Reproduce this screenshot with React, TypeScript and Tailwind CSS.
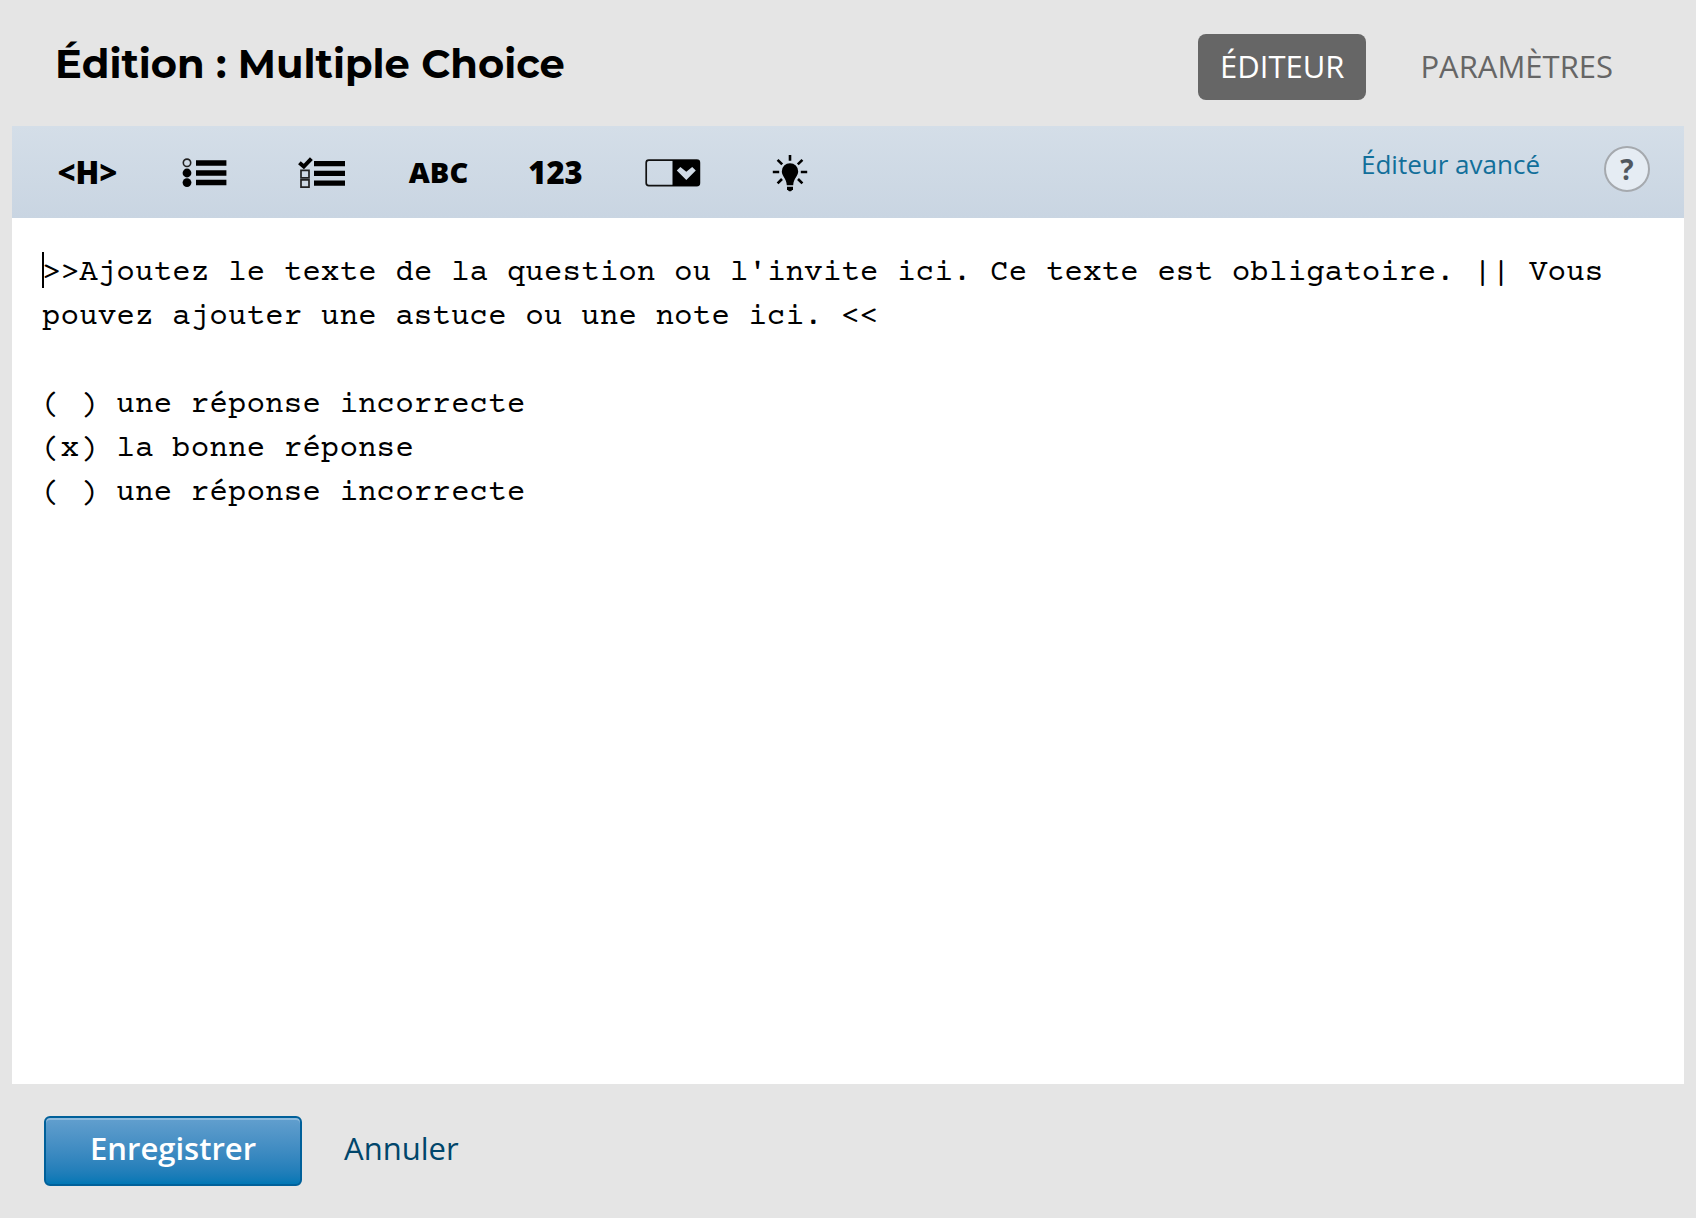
import { useState } from "react";

const initialText = `>>Ajoutez le texte de la question ou l'invite ici. Ce texte est obligatoire. || Vous pouvez ajouter une astuce ou une note ici. <<

( ) une réponse incorrecte
(x) la bonne réponse
( ) une réponse incorrecte`;

function ChoiceIcon() {
  return (
    <svg width="46" height="32" viewBox="0 0 46 32" aria-hidden="true">
      <circle cx="5" cy="5.8" r="3.7" fill="none" stroke="#222" strokeWidth="1.6" />
      <circle cx="5" cy="16" r="4.4" />
      <circle cx="5" cy="25.6" r="4.4" />
      <path d="M14 3.3h30.4v5.4H14zM14 13.3h30.4v5.4H14zM14 22.8h30.4v5.4H14z" />
    </svg>
  );
}

function CheckboxIcon() {
  return (
    <svg width="48" height="32" viewBox="0 0 48 32" aria-hidden="true">
      <path d="M1.4 5.8 5.8 9.6 13.4 1.6" fill="none" stroke="#000" strokeWidth="4" />
      <path d="M3 13.4h8v7.4H3zM3 22.8h8v7.4H3z" fill="none" stroke="#222" strokeWidth="1.7" />
      <path d="M16 4h31v5.2H16zM16 13.8h31V19H16zM16 23.6h31v5.2H16z" />
    </svg>
  );
}

function DropdownIcon() {
  return (
    <svg width="56" height="28" viewBox="0 0 56 28" aria-hidden="true">
      <rect x="1.2" y="1.2" width="53.2" height="25.4" rx="2.6" fill="none" stroke="#111" strokeWidth="1.7" />
      <path d="M27.5 1H52a3 3 0 0 1 3 3v20a3 3 0 0 1-3 3H27.5z" />
      <path d="M31.8 11.6 35.4 8l5.9 4.8L47.2 8l3.6 3.6-9.5 9.4z" fill="#d0dae5" />
    </svg>
  );
}

function BulbIcon() {
  return (
    <svg width="36" height="38" viewBox="0 0 36 38" aria-hidden="true">
      <path d="M18 9.2a8.2 8.2 0 0 0-8.2 8.2c0 4.6 4.6 6.6 5 13.8h6.4c.4-7.2 5-9.2 5-13.8A8.2 8.2 0 0 0 18 9.2z" />
      <path d="M15 32.8h6v2.4l-2 2h-2l-2-2z" />
      <path
        d="M18 1v5.8M.8 18h6.4M28.8 18h6.4M5.6 5.8l4.6 4.6M30.4 5.8l-4.6 4.6M5.6 29.4l4.4-4.4M30.4 29.4 26 25"
        stroke="#000"
        strokeWidth="2.6"
        fill="none"
      />
    </svg>
  );
}

const tools = [
  { name: "Titre", icon: <span className="pb-0.5 text-[31px]">&lt;H&gt;</span> },
  { name: "Choix multiple", icon: <ChoiceIcon /> },
  { name: "Cases à cocher", icon: <CheckboxIcon /> },
  { name: "Texte", icon: <span className="pb-0.5 text-[29px]">ABC</span> },
  { name: "Nombre", icon: <span className="pb-0.5 text-[31px]">123</span> },
  { name: "Liste déroulante", icon: <DropdownIcon /> },
  { name: "Explication", icon: <BulbIcon /> },
];

export default function App() {
  const [text, setText] = useState(initialText);
  return (
    <main className="flex min-h-screen flex-col bg-[#e5e5e5] px-3 font-['Open_Sans',sans-serif] text-black">
      <header className="flex h-[126px] items-center justify-between pr-[49px] pl-[43px]">
        <h1 className="pt-0.5 font-['Montserrat','Inter',sans-serif] text-[40px] leading-[44px] font-bold">
          Édition : Multiple Choice
        </h1>
        <nav className="mt-2 flex gap-8 text-[31px] leading-[64px]">
          <button type="button" className="rounded-lg bg-[#666] px-[22px] pb-0.5 text-white">
            ÉDITEUR
          </button>
          <button type="button" className="rounded-lg px-[22px] pb-0.5 text-[#666]">
            PARAMÈTRES
          </button>
        </nav>
      </header>

      <section className="flex flex-1 flex-col bg-white">
        <div className="flex h-[92px] items-center bg-linear-to-b from-[#d4dee8] to-[#c9d5e2] pr-[34px] pl-[17px]">
          <div className="flex flex-1">
            {tools.map((tool) => (
              <button
                key={tool.name}
                type="button"
                aria-label={tool.name}
                className="flex h-12 w-[117px] items-center justify-center pt-0.5 leading-8 font-extrabold"
              >
                {tool.icon}
              </button>
            ))}
          </div>
          <div className="mb-1.5 flex items-center gap-16">
            <a href="#avance" className="mb-2.5 text-[26px] leading-9 text-[#126f9a]">
              Éditeur avancé
            </a>
            <button
              type="button"
              aria-label="Aide"
              className="size-[46px] rounded-full border-2 border-[#a5a9ae] bg-[#e5ecf3] text-[28px] leading-10 font-bold text-[#51585f]"
            >
              ?
            </button>
          </div>
        </div>
        <div className="relative flex flex-1 flex-col px-[30px] pt-[34px]">
          <textarea
            aria-label="Contenu du problème"
            value={text}
            onChange={(e) => setText(e.target.value)}
            spellCheck={false}
            className="w-full flex-1 resize-none bg-transparent font-['Courier_Prime','Liberation_Mono',monospace] text-[31px] leading-[44px] outline-none"
          />
          <span className="absolute top-[34px] left-[30px] h-9 w-0.5 bg-black" />
        </div>
      </section>

      <footer className="flex h-[134px] items-start gap-[42px] px-8 pt-8 text-[31px]">
        <button
          type="button"
          className="h-[70px] rounded-md border-2 border-[#00609a] bg-linear-to-b from-[#629fce] to-[#0077b5] px-11 pb-1.5 font-semibold text-white shadow-[inset_0_2px_0_#8fbbdd]"
        >
          Enregistrer
        </button>
        <a href="#annuler" className="leading-[64px] text-[#00466b]">
          Annuler
        </a>
      </footer>
    </main>
  );
}
